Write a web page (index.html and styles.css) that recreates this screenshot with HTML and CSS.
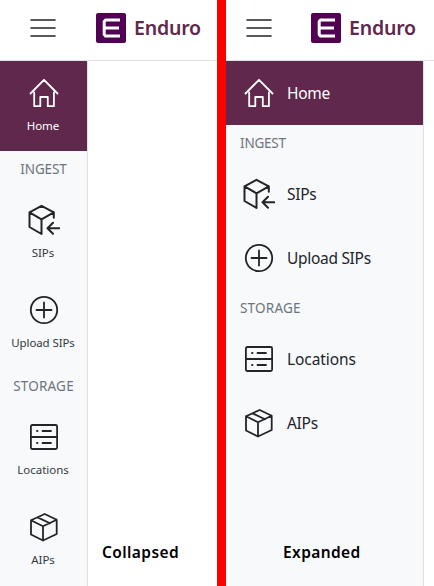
FILE: index.html
```
<!DOCTYPE html>
<html lang="en">
<head>
<meta charset="utf-8">
<title>Enduro</title>
<link rel="stylesheet" href="styles.css">
</head>
<body>
<svg class="defs" xmlns="http://www.w3.org/2000/svg">
  <symbol id="menu" viewBox="0 0 28 20"><path d="M2 2h24M2 10h24M2 18h24" stroke-width="1.6"/></symbol>
  <symbol id="logo" viewBox="0 0 30 30"><rect width="30" height="30" rx="2" fill="#520052" stroke="none"/><path d="M24 7H9.500L8.200 8.500V21.500L9.500 23H24M9 15H23" stroke="#fff" stroke-width="3" stroke-linecap="butt"/></symbol>
  <symbol id="home" viewBox="0 0 32 32"><path d="M2.500 16.500L16 2.800L29.500 16.500M6.200 15.500V29.200H12.300V20H19.800V29.200H25.900V15.500"/></symbol>
  <symbol id="sips" viewBox="0 0 32 32"><path d="M13.500 30V15.300L1.500 8.300L13.500 1.800L25.800 8.300V13.800M25.800 8.300L13.500 15.300M1.500 8.300V23L13.500 30M31.300 24.300H19.500M25 18.800L19.500 24.300L25 29.800" stroke-width="2"/></symbol>
  <symbol id="upload" viewBox="0 0 32 32"><circle cx="16" cy="16" r="13.200"/><path d="M8.500 16h15M16 8.500v15"/></symbol>
  <symbol id="locations" viewBox="0 0 32 32"><rect x="2.900" y="4" width="26.200" height="24" rx="1.500"/><path d="M3 16h26M9 10h.5M14.500 10h8.500M9 22h.5M14.500 22h8.500"/></symbol>
  <symbol id="aips" viewBox="0 0 32 32"><path d="M3 9.200L16.700 3L28.700 8.800V23L15 29.500L3 23.500ZM3 9.200L15 15.300L28.700 8.800M15 15.300V29.500M9.500 6.400L22 12.200"/></symbol>
</svg>
<div class="app">
  <section class="pane collapsed">
    <header class="bar">
      <svg class="menu"><use href="#menu"/></svg>
      <svg class="logo"><use href="#logo"/></svg>
      <span class="brand">Enduro</span>
    </header>
    <div class="body">
      <nav class="side">
        <a class="item active"><svg><use href="#home"/></svg><span class="t-home">Home</span></a>
        <h2 class="t-ingest">INGEST</h2>
        <a class="item"><svg><use href="#sips"/></svg><span class="t-sips">SIPs</span></a>
        <a class="item"><svg><use href="#upload"/></svg><span class="t-upload">Upload SIPs</span></a>
        <h2 class="t-storage">STORAGE</h2>
        <a class="item"><svg><use href="#locations"/></svg><span class="t-locations">Locations</span></a>
        <a class="item"><svg><use href="#aips"/></svg><span class="t-aips">AIPs</span></a>
      </nav>
      <p class="caption">Collapsed</p>
    </div>
  </section>
  <section class="pane expanded">
    <header class="bar">
      <svg class="menu"><use href="#menu"/></svg>
      <svg class="logo"><use href="#logo"/></svg>
      <span class="brand">Enduro</span>
    </header>
    <div class="body">
      <nav class="side">
        <a class="item active"><svg><use href="#home"/></svg><span class="t-home">Home</span></a>
        <h2 class="t-ingest">INGEST</h2>
        <a class="item"><svg><use href="#sips"/></svg><span class="t-sips">SIPs</span></a>
        <a class="item"><svg><use href="#upload"/></svg><span class="t-upload">Upload SIPs</span></a>
        <h2 class="t-storage">STORAGE</h2>
        <a class="item"><svg><use href="#locations"/></svg><span class="t-locations">Locations</span></a>
        <a class="item"><svg><use href="#aips"/></svg><span class="t-aips">AIPs</span></a>
        <p class="caption">Expanded</p>
      </nav>
    </div>
  </section>
</div>
</body>
</html>
```
FILE: styles.css
```
* { box-sizing: border-box; margin: 0; }
body { font-family: "Noto Sans", "Open Sans", sans-serif; color: #212529; background: #fff; overflow: hidden; }
.defs { position: absolute; width: 0; height: 0; }
svg { display: block; flex: none; fill: none; stroke: #212529; stroke-width: 1.8; stroke-linecap: round; stroke-linejoin: round; }
.app { display: flex; height: 586px; }
.pane { display: flex; flex-direction: column; }
.collapsed { width: 217px; }
.expanded { width: 217px; border-left: 9px solid #f00; }
.bar { display: flex; align-items: center; height: 61px; padding: 0 0 4px 29px; border-bottom: 1px solid #dee2e6; }
.expanded .bar { padding-left: 19px; }
.menu { width: 28px; height: 20px; margin-right: 39px; }
.expanded .menu { margin-right: 38px; }
.logo { width: 30px; height: 30px; margin-right: 8px; }
.brand { font-size: 19.5px; line-height: 28px; font-weight: 600; letter-spacing: -0.2px; color: #5f284c; white-space: nowrap; }
.body { display: flex; flex: 1; }
.side { width: 88px; background: #f8f9fb; border-right: 1px solid #dee2e6; display: flex; flex-direction: column; }
.expanded .side { width: 198px; }
.item { display: flex; flex-direction: column; align-items: center; height: 90px; padding: 16px 1px 0 0; font-size: 11.5px; line-height: 16px; white-space: nowrap; color: #343a40; }
.item svg { width: 32px; height: 32px; margin-left: 2px; }
.item span { margin-top: 9px; }
.active { background: #5f284c; color: #fff; }
.active svg { stroke: #fff; }
h2 { font-size: 13.5px; font-weight: 400; color: #6c757d; height: 37px; line-height: 36px; text-align: center; white-space: nowrap; }
.collapsed .t-ingest { letter-spacing: -0.1px; }
.collapsed .t-storage { letter-spacing: 0.2px; }
.collapsed .t-upload { letter-spacing: -0.1px; }
.expanded .item { flex-direction: row; height: 64px; padding: 0 0 0 16px; font-size: 15.5px; line-height: 24px; letter-spacing: -0.3px; color: #212529; }
.expanded .active { color: #fff; }
.expanded .item svg { margin: 0 12px 0 1px; }
.expanded .item span { margin: 0; }
.expanded .item .t-locations { letter-spacing: -0.1px; }
.expanded h2 { text-align: left; padding-left: 14px; }
.expanded .t-ingest { letter-spacing: -0.2px; }
.expanded .t-storage { letter-spacing: 0.2px; }
.caption { font-size: 15.5px; font-weight: 600; line-height: 22px; letter-spacing: 0.4px; color: #000; }
.collapsed .caption { margin: auto 0 23px 14px; }
.expanded .caption { margin: auto 0 23px 57px; }
```
